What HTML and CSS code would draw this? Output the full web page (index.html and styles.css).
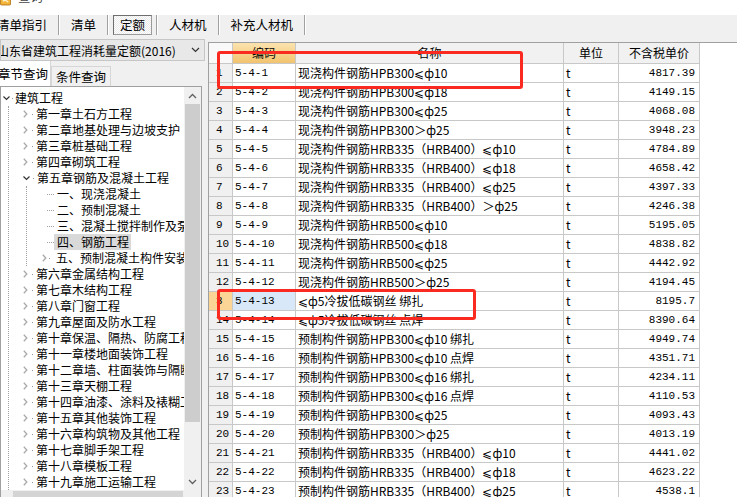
FILE: index.html
```html
<!DOCTYPE html>
<html lang="zh-CN">
<head>
  <meta charset="UTF-8" />
  <title>查询</title>
  <link rel="stylesheet" href="styles.css">
</head>
<body>
  <div class="titlebar">
    <svg class="app-icon" viewBox="0 0 12 14">
      <rect x="0.5" y="0.5" width="11" height="13" rx="1" fill="#f3b43a" stroke="#b7771a"/>
      <path d="M3 9.5 Q6 7 9 10.5" fill="none" stroke="#fff3d0" stroke-width="1.2"/>
    </svg>
    <span>查询</span>
  </div>

  <div class="toolbar">
    <div class="tab">清单指引</div>
    <div class="sep"></div>
    <div class="tab">清单</div>
    <div class="sep"></div>
    <div class="tab on"><span class="box">定额</span></div>
    <div class="sep"></div>
    <div class="tab">人材机</div>
    <div class="sep"></div>
    <div class="tab">补充人材机</div>
    <div class="sep"></div>
  </div>

  <div class="main">
    <div class="left">
      <div class="combo">
        <span>山东省建筑工程消耗量定额(2016)</span>
        <svg class="combo-arrow" viewBox="0 0 9 6"><path d="M1 1l3.5 3.5L8 1"/></svg>
      </div>

      <div class="qtabs">
        <div class="qtab on">章节查询</div>
        <div class="qtab">条件查询</div>
      </div>

      <div class="tree">
        <div class="tree-body">
          <div class="node root">
            <svg class="arr down" viewBox="0 0 7 5"><path d="M0.5 0.5l3 3 3-3"/></svg><i class="dot"></i>
            <span class="lbl">建筑工程</span>
          </div>
          <div class="kids">
            <div class="node"><svg class="arr" viewBox="0 0 5 8"><path d="M0.8 0.8l3 3.2-3 3.2"/></svg><i class="dot"></i><span class="lbl">第一章土石方工程</span></div>
            <div class="node"><svg class="arr" viewBox="0 0 5 8"><path d="M0.8 0.8l3 3.2-3 3.2"/></svg><i class="dot"></i><span class="lbl">第二章地基处理与边坡支护</span></div>
            <div class="node"><svg class="arr" viewBox="0 0 5 8"><path d="M0.8 0.8l3 3.2-3 3.2"/></svg><i class="dot"></i><span class="lbl">第三章桩基础工程</span></div>
            <div class="node"><svg class="arr" viewBox="0 0 5 8"><path d="M0.8 0.8l3 3.2-3 3.2"/></svg><i class="dot"></i><span class="lbl">第四章砌筑工程</span></div>
            <div class="node"><svg class="arr down" viewBox="0 0 7 5"><path d="M0.5 0.5l3 3 3-3"/></svg><i class="dot"></i><span class="lbl">第五章钢筋及混凝土工程</span></div>
            <div class="kids sub">
              <div class="node leaf"><i class="dots"></i><span class="lbl">一、现浇混凝土</span></div>
              <div class="node leaf"><i class="dots"></i><span class="lbl">二、预制混凝土</span></div>
              <div class="node leaf"><i class="dots"></i><span class="lbl">三、混凝土搅拌制作及泵送</span></div>
              <div class="node leaf"><i class="dots"></i><span class="lbl sel">四、钢筋工程</span></div>
              <div class="node branch"><svg class="arr" viewBox="0 0 5 8"><path d="M0.8 0.8l3 3.2-3 3.2"/></svg><i class="dot"></i><span class="lbl">五、预制混凝土构件安装</span></div>
            </div>
            <div class="node"><svg class="arr" viewBox="0 0 5 8"><path d="M0.8 0.8l3 3.2-3 3.2"/></svg><i class="dot"></i><span class="lbl">第六章金属结构工程</span></div>
            <div class="node"><svg class="arr" viewBox="0 0 5 8"><path d="M0.8 0.8l3 3.2-3 3.2"/></svg><i class="dot"></i><span class="lbl">第七章木结构工程</span></div>
            <div class="node"><svg class="arr" viewBox="0 0 5 8"><path d="M0.8 0.8l3 3.2-3 3.2"/></svg><i class="dot"></i><span class="lbl">第八章门窗工程</span></div>
            <div class="node"><svg class="arr" viewBox="0 0 5 8"><path d="M0.8 0.8l3 3.2-3 3.2"/></svg><i class="dot"></i><span class="lbl">第九章屋面及防水工程</span></div>
            <div class="node"><svg class="arr" viewBox="0 0 5 8"><path d="M0.8 0.8l3 3.2-3 3.2"/></svg><i class="dot"></i><span class="lbl">第十章保温、隔热、防腐工程</span></div>
            <div class="node"><svg class="arr" viewBox="0 0 5 8"><path d="M0.8 0.8l3 3.2-3 3.2"/></svg><i class="dot"></i><span class="lbl">第十一章楼地面装饰工程</span></div>
            <div class="node"><svg class="arr" viewBox="0 0 5 8"><path d="M0.8 0.8l3 3.2-3 3.2"/></svg><i class="dot"></i><span class="lbl">第十二章墙、柱面装饰与隔断、幕墙工程</span></div>
            <div class="node"><svg class="arr" viewBox="0 0 5 8"><path d="M0.8 0.8l3 3.2-3 3.2"/></svg><i class="dot"></i><span class="lbl">第十三章天棚工程</span></div>
            <div class="node"><svg class="arr" viewBox="0 0 5 8"><path d="M0.8 0.8l3 3.2-3 3.2"/></svg><i class="dot"></i><span class="lbl">第十四章油漆、涂料及裱糊工程</span></div>
            <div class="node"><svg class="arr" viewBox="0 0 5 8"><path d="M0.8 0.8l3 3.2-3 3.2"/></svg><i class="dot"></i><span class="lbl">第十五章其他装饰工程</span></div>
            <div class="node"><svg class="arr" viewBox="0 0 5 8"><path d="M0.8 0.8l3 3.2-3 3.2"/></svg><i class="dot"></i><span class="lbl">第十六章构筑物及其他工程</span></div>
            <div class="node"><svg class="arr" viewBox="0 0 5 8"><path d="M0.8 0.8l3 3.2-3 3.2"/></svg><i class="dot"></i><span class="lbl">第十七章脚手架工程</span></div>
            <div class="node"><svg class="arr" viewBox="0 0 5 8"><path d="M0.8 0.8l3 3.2-3 3.2"/></svg><i class="dot"></i><span class="lbl">第十八章模板工程</span></div>
            <div class="node"><svg class="arr" viewBox="0 0 5 8"><path d="M0.8 0.8l3 3.2-3 3.2"/></svg><i class="dot"></i><span class="lbl">第十九章施工运输工程</span></div>
          </div>
        </div>

        <div class="vscroll">
          <div class="sb-btn"><svg viewBox="0 0 9 6"><path d="M1 5l3.5-3.5L8 5"/></svg></div>
          <div class="sb-thumb"></div>
          <div class="sb-track"></div>
          <div class="sb-btn"><svg viewBox="0 0 9 6"><path d="M1 1l3.5 3.5L8 1"/></svg></div>
        </div>
        <div class="hscroll"><div class="hs-thumb"></div></div>
        <div class="corner"></div>
      </div>
    </div>

    <div class="grid">
      <div class="grid-inner">
        <table class="list">
          <colgroup>
            <col class="c-num"><col class="c-code"><col class="c-name"><col class="c-unit"><col class="c-price">
          </colgroup>
          <thead>
            <tr><th class="corner-h"></th><th class="code-h">编码</th><th>名称</th><th>单位</th><th>不含税单价</th></tr>
          </thead>
          <tbody>
            <tr><td class="num">1</td><td class="code">5-4-1</td><td>现浇构件钢筋HPB300⩽ф10</td><td>t</td><td class="price">4817.39</td></tr>
            <tr><td class="num">2</td><td class="code">5-4-2</td><td>现浇构件钢筋HPB300⩽ф18</td><td>t</td><td class="price">4149.15</td></tr>
            <tr><td class="num">3</td><td class="code">5-4-3</td><td>现浇构件钢筋HPB300⩽ф25</td><td>t</td><td class="price">4068.08</td></tr>
            <tr><td class="num">4</td><td class="code">5-4-4</td><td>现浇构件钢筋HPB300＞ф25</td><td>t</td><td class="price">3948.23</td></tr>
            <tr><td class="num">5</td><td class="code">5-4-5</td><td>现浇构件钢筋HRB335（HRB400）⩽ф10</td><td>t</td><td class="price">4784.89</td></tr>
            <tr><td class="num">6</td><td class="code">5-4-6</td><td>现浇构件钢筋HRB335（HRB400）⩽ф18</td><td>t</td><td class="price">4658.42</td></tr>
            <tr><td class="num">7</td><td class="code">5-4-7</td><td>现浇构件钢筋HRB335（HRB400）⩽ф25</td><td>t</td><td class="price">4397.33</td></tr>
            <tr><td class="num">8</td><td class="code">5-4-8</td><td>现浇构件钢筋HRB335（HRB400）＞ф25</td><td>t</td><td class="price">4246.38</td></tr>
            <tr><td class="num">9</td><td class="code">5-4-9</td><td>现浇构件钢筋HRB500⩽ф10</td><td>t</td><td class="price">5195.05</td></tr>
            <tr><td class="num">10</td><td class="code">5-4-10</td><td>现浇构件钢筋HRB500⩽ф18</td><td>t</td><td class="price">4838.82</td></tr>
            <tr><td class="num">11</td><td class="code">5-4-11</td><td>现浇构件钢筋HRB500⩽ф25</td><td>t</td><td class="price">4442.92</td></tr>
            <tr><td class="num">12</td><td class="code">5-4-12</td><td>现浇构件钢筋HRB500＞ф25</td><td>t</td><td class="price">4194.45</td></tr>
            <tr class="cur"><td class="num">3</td><td class="code">5-4-13</td><td>⩽ф5冷拔低碳钢丝 绑扎</td><td>t</td><td class="price">8195.7</td></tr>
            <tr><td class="num">14</td><td class="code">5-4-14</td><td>⩽ф5冷拔低碳钢丝 点焊</td><td>t</td><td class="price">8390.64</td></tr>
            <tr><td class="num">15</td><td class="code">5-4-15</td><td>预制构件钢筋HPB300⩽ф10 绑扎</td><td>t</td><td class="price">4949.74</td></tr>
            <tr><td class="num">16</td><td class="code">5-4-16</td><td>预制构件钢筋HPB300⩽ф10 点焊</td><td>t</td><td class="price">4351.71</td></tr>
            <tr><td class="num">17</td><td class="code">5-4-17</td><td>预制构件钢筋HPB300⩽ф16 绑扎</td><td>t</td><td class="price">4234.11</td></tr>
            <tr><td class="num">18</td><td class="code">5-4-18</td><td>预制构件钢筋HPB300⩽ф16 点焊</td><td>t</td><td class="price">4110.53</td></tr>
            <tr><td class="num">19</td><td class="code">5-4-19</td><td>预制构件钢筋HPB300⩽ф25</td><td>t</td><td class="price">4093.43</td></tr>
            <tr><td class="num">20</td><td class="code">5-4-20</td><td>预制构件钢筋HPB300＞ф25</td><td>t</td><td class="price">4013.19</td></tr>
            <tr><td class="num">21</td><td class="code">5-4-21</td><td>预制构件钢筋HRB335（HRB400）⩽ф10</td><td>t</td><td class="price">4441.02</td></tr>
            <tr><td class="num">22</td><td class="code">5-4-22</td><td>预制构件钢筋HRB335（HRB400）⩽ф18</td><td>t</td><td class="price">4623.22</td></tr>
            <tr><td class="num">23</td><td class="code">5-4-23</td><td>预制构件钢筋HRB335（HRB400）⩽ф25</td><td>t</td><td class="price">4538.1</td></tr>
          </tbody>
        </table>

        <!-- red annotation boxes drawn over the grid -->
        <div class="mark mark-a"></div>
        <div class="mark mark-b"></div>
      </div>
    </div>
  </div>
</body>
</html>
```

FILE: styles.css
```css
/* Reset */
* {
  margin: 0;
  padding: 0;
  box-sizing: border-box;
}
body {
  width: 737px;
  height: 497px;
  overflow: hidden;
  background: #fff;
  color: #000;
  font-family: "Noto Sans CJK SC", sans-serif;
  font-size: 12px;
}

/* Title bar (mostly scrolled off the top) */
.titlebar {
  height: 15px;
  overflow: hidden;
  display: flex;
}
.app-icon {
  width: 11px;
  height: 14px;
  margin-top: -8px;
}
.titlebar span {
  margin-left: 7px;
  margin-top: -11px;
  font-size: 12.5px;
  line-height: 16px;
  color: #444;
}

/* Toolbar tabs */
.toolbar {
  height: 24px;
  background: #f0f0f0;
  display: flex;
  align-items: flex-start;
}
.tab {
  height: 20px;
  line-height: 20px;
  padding: 0 11px;
  font-size: 12.5px;
  white-space: nowrap;
}
.tab:first-child {
  margin-left: -14px;
}
.tab.on {
  padding: 0 4px;
}
.tab.on .box {
  display: block;
  height: 20px;
  line-height: 18px;
  padding: 0 6px;
  border: 1px solid #6e6e6e;
  border-right-color: #9a9a9a;
  border-bottom-color: #9a9a9a;
  background: repeating-conic-gradient(#fff 0 25%, #e9e9e9 0 50%) 0 0 / 2px 2px;
}
.sep {
  width: 2px;
  height: 20px;
  border-left: 1px solid #a0a0a0;
  border-right: 1px solid #fff;
}

/* Main area */
.main {
  display: flex;
  height: 458px;
  overflow: hidden;
}
.left {
  width: 205px;
  flex: none;
  background: #f0f0f0;
  display: flex;
  flex-direction: column;
}
.combo {
  height: 22px;
  flex: none;
  display: flex;
  align-items: center;
  justify-content: space-between;
  background: #e8e8e8;
  border: 1px solid #c6c6c6;
  padding-right: 4px;
  overflow: hidden;
}
.combo span {
  margin-left: -4px;
  white-space: nowrap;
}
.combo-arrow {
  width: 9px;
  height: 6px;
  fill: none;
  stroke: #333;
  stroke-width: 1.2;
}

.qtabs {
  height: 25px;
  flex: none;
  display: flex;
  align-items: flex-end;
}
.qtab {
  height: 20px;
  line-height: 19px;
  padding: 0 4px;
  font-size: 12.5px;
  background: #f0f0f0;
  border: 1px solid #d6d6d6;
  border-bottom: none;
  white-space: nowrap;
}
.qtab.on {
  height: 25px;
  line-height: 25px;
  margin-left: -2px;
  padding: 0 2px 0 0;
  background: #fff;
  border: none;
  border-right: 1px solid #d6d6d6;
}

/* Tree */
.tree {
  width: 202px;
  height: 422px;
  flex: none;
  background: #fff;
  border: 1px solid #a0a0a0;
  display: grid;
  grid-template-columns: 1fr 17px;
  grid-template-rows: 1fr 17px;
  overflow: hidden;
}
.tree-body {
  padding-top: 3px;
  overflow: hidden;
}
.node {
  height: 16px;
  display: flex;
  align-items: center;
  white-space: nowrap;
}
.lbl {
  line-height: 16px;
}
.arr {
  width: 5px;
  height: 8px;
  fill: none;
  stroke: #a9a9a9;
  stroke-width: 1.3;
  flex: none;
}
.arr.down {
  width: 7px;
  height: 5px;
  stroke: #333;
  stroke-width: 1.2;
}
.dot {
  width: 1px;
  height: 1px;
  background: #999;
  flex: none;
}
.root {
  padding-left: 2px;
}
.root .arr {
  margin-right: 2px;
}
.root .dot {
  margin-right: 2px;
}
.kids {
  margin-left: 7px;
  border-left: 1px dotted #a0a0a0;
}
.kids > .node {
  padding-left: 14px;
}
.kids > .node .arr {
  margin-right: 4px;
}
.kids > .node .arr.down {
  margin-right: 3px;
}
.kids > .node .dot {
  margin-right: 3px;
}
.kids.sub {
  margin-left: 17px;
}
.sub > .leaf {
  padding-left: 20px;
}
.dots {
  width: 7px;
  border-top: 1px dotted #a0a0a0;
  flex: none;
}
.leaf .lbl {
  padding: 0 2px 0 3px;
}
.lbl.sel {
  background: #d9d9d9;
}
.sub > .branch {
  padding-left: 15px;
}
.sub > .branch .arr {
  margin-right: 2px;
}
.sub > .branch .dot {
  margin-right: 6px;
}

.vscroll {
  background: #f0f0f0;
  display: flex;
  flex-direction: column;
  overflow: hidden;
}
.sb-btn {
  height: 17px;
  display: flex;
  align-items: center;
  justify-content: center;
  flex: none;
}
.sb-btn svg {
  width: 9px;
  height: 6px;
  fill: none;
  stroke: #606060;
  stroke-width: 1.3;
}
.sb-thumb {
  height: 318px;
  margin: 0 1px;
  background: #cdcdcd;
  flex: none;
}
.sb-track {
  flex: 1;
}
.hscroll {
  background: #f0f0f0;
  padding-top: 1px;
}
.hs-thumb {
  width: 170px;
  height: 15px;
  margin-left: 12px;
  background: #d4d4d4;
}
.corner {
  background: #f0f0f0;
}

/* Grid */
.grid {
  flex: 1;
  background: #f0f0f0;
  padding: 3px 0 0 3px;
}
.grid-inner {
  position: relative;
  height: 100%;
  background: #fff;
  border-top: 1px solid #a0a0a0;
  border-left: 1px solid #a0a0a0;
  overflow: hidden;
}
.list {
  border-collapse: separate;
  border-spacing: 0;
  table-layout: fixed;
  width: 491px;
}
.c-num { width: 24px; }
.c-code { width: 63px; }
.c-name { width: 268px; }
.c-unit { width: 55px; }
.c-price { width: 81px; }
.list th,
.list td {
  height: 19px;
  padding: 0 2px;
  line-height: 18px;
  border-right: 1px solid #c8c8c8;
  border-bottom: 1px solid #c8c8c8;
  white-space: nowrap;
  overflow: hidden;
  text-align: left;
  font-weight: normal;
}
.list th {
  height: 21px;
  line-height: 20px;
  text-align: center;
  background: #f1f1f1;
}
.list th.corner-h {
  background: #f9f9f9;
}
.list th.code-h {
  background: linear-gradient(#fbe3ae, #f2c36d);
}
.list td.num {
  padding-left: 7px;
  background: #f0f0f0;
  font-family: "Liberation Mono", monospace;
  font-size: 11px;
}
.list td.code {
  font-family: "Liberation Mono", monospace;
  font-size: 11px;
}
.list td.price {
  text-align: right;
  padding-right: 4px;
  font-family: "Liberation Mono", monospace;
  font-size: 11px;
}
.list tr.cur td.num {
  background: #fad595;
}
.list tr.cur td.code {
  background: #d9e8f8;
}

/* Red annotation boxes */
.mark {
  position: absolute;
  border: 3px solid #fb2a20;
  border-radius: 3px;
}
.mark-a {
  left: 8px;
  top: 8px;
  width: 306px;
  height: 38px;
}
.mark-b {
  left: 8px;
  top: 246px;
  width: 259px;
  height: 31px;
}
```
